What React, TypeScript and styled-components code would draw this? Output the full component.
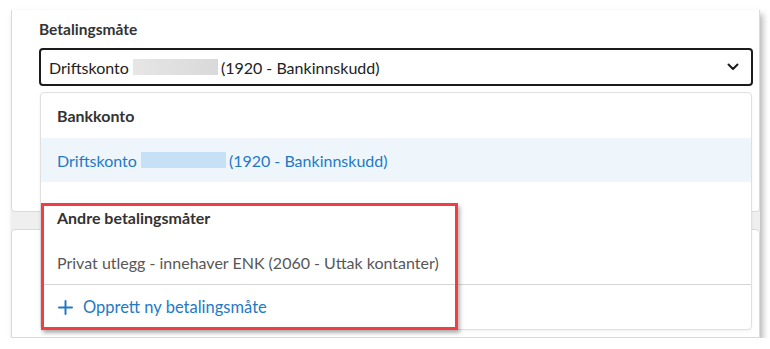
import styled, { createGlobalStyle } from "styled-components";

const GlobalStyle = createGlobalStyle`
  body {
    margin: 0;
    background: #ffffff;
    font-family: "Lato", "Open Sans", sans-serif;
  }
`;

const Frame = styled.div`
  position: relative;
  margin: 10px 0 0 11px;
  width: 749px;
  height: 328px;
  background: #efefef;
  box-shadow: 3px 4px 6px rgba(0, 0, 0, 0.28);
  display: flex;
  flex-direction: column;
  gap: 17px;
`;

const Card = styled.div<{ $top?: boolean }>`
  box-sizing: border-box;
  background: #fff;
  border: 1px solid #dadada;
  ${(p) =>
    p.$top
      ? `border-top: none; border-radius: 0 0 4px 4px; height: 202px; padding: 10px 6px 0 27px;`
      : `border-radius: 4px 4px 0 0; flex: 1;`}
`;

const Label = styled.div`
  font-size: 15.5px;
  font-weight: 700;
  line-height: 18px;
  color: #333;
`;

const Select = styled.div`
  box-sizing: border-box;
  margin-top: 10px;
  height: 38px;
  border: 2px solid #1c1c1c;
  border-radius: 4px;
  display: flex;
  align-items: center;
  justify-content: space-between;
  padding: 0 12px 0 8px;
  font-size: 16px;
  color: #222;
`;

const Value = styled.span`
  display: flex;
  align-items: center;
`;

const Redacted = styled.span<{ $blue?: boolean }>`
  display: inline-block;
  width: 85px;
  height: 16px;
  margin: 0 3px 0 4px;
  background: ${(p) =>
    p.$blue ? "#c6e0f5" : "linear-gradient(90deg, #e6e6e6, #d9d9d9)"};
`;

const Menu = styled.div`
  position: absolute;
  left: 29px;
  top: 82px;
  box-sizing: border-box;
  width: 712px;
  height: 238px;
  background: #fff;
  border: 1px solid #e0e0e0;
  border-radius: 4px;
  box-shadow: 0 1px 3px rgba(0, 0, 0, 0.06);
  display: flex;
  flex-direction: column;
`;

const GroupTitle = styled.div<{ $spaced?: boolean }>`
  height: 45px;
  display: flex;
  align-items: center;
  padding-left: 16px;
  margin-top: ${(p) => (p.$spaced ? "13px" : "0")};
  font-size: 16px;
  font-weight: 700;
  color: #333;
`;

const Option = styled.div<{ $active?: boolean }>`
  height: 44px;
  display: flex;
  align-items: center;
  padding-left: 16px;
  font-size: 16px;
  color: ${(p) => (p.$active ? "#2479c7" : "#575757")};
  background: ${(p) => (p.$active ? "#eef6fc" : "transparent")};
`;

const CreateRow = styled.div`
  height: 44px;
  display: flex;
  align-items: center;
  gap: 10px;
  padding-left: 17px;
  border-top: 1px solid #d6d6d6;
  font-size: 16.5px;
  color: #2479c7;
`;

const Highlight = styled.div`
  position: absolute;
  left: 30px;
  top: 193px;
  width: 417px;
  height: 127px;
  box-sizing: border-box;
  border: 3px solid #f23d47;
  box-shadow: 2px 3px 4px rgba(0, 0, 0, 0.3);
  pointer-events: none;
`;

const Chevron = () => (
  <svg width="12" height="8" viewBox="0 0 12 8" fill="none">
    <path d="M1.5 1.5 6 6l4.5-4.5" stroke="#1c1c1c" strokeWidth="2" strokeLinecap="round" strokeLinejoin="round" />
  </svg>
);

const Plus = () => (
  <svg width="15" height="15" viewBox="0 0 15 15" fill="none">
    <path d="M7.5 1v13M1 7.5h13" stroke="#2479c7" strokeWidth="2" strokeLinecap="round" />
  </svg>
);

export default function App() {
  return (
    <>
      <GlobalStyle />
      <Frame>
        <Card $top>
          <Label>Betalingsmåte</Label>
          <Select>
            <Value>
              Driftskonto
              <Redacted />
              (1920 - Bankinnskudd)
            </Value>
            <Chevron />
          </Select>
        </Card>
        <Card />
        <Menu>
          <GroupTitle>Bankkonto</GroupTitle>
          <Option $active>
            Driftskonto
            <Redacted $blue />
            (1920 - Bankinnskudd)
          </Option>
          <GroupTitle $spaced>Andre betalingsmåter</GroupTitle>
          <Option>Privat utlegg - innehaver ENK (2060 - Uttak kontanter)</Option>
          <CreateRow>
            <Plus />
            Opprett ny betalingsmåte
          </CreateRow>
        </Menu>
        <Highlight />
      </Frame>
    </>
  );
}
